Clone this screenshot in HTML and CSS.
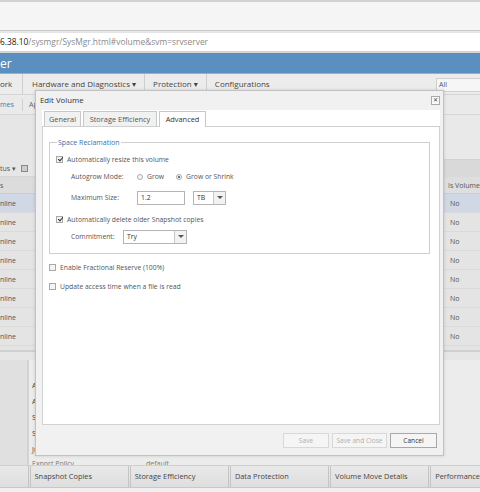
FILE: index.html
```html
<!DOCTYPE html>
<html>
<head>
<meta charset="utf-8">
<link rel="stylesheet" href="styles.css">
</head>
<body>
<div class="page">
  <div class="chrome-top"></div>
  <div class="addr"><span class="host">6.38.10</span><span class="path">/sysmgr/SysMgr.html#volume&amp;svm=srvserver</span></div>
  <div class="brand">er</div>
  <div class="menubar">
    <span class="mi mi-first">ork</span>
    <span class="mi">Hardware and Diagnostics ▾</span>
    <span class="mi">Protection ▾</span>
    <span class="mi mi-last">Configurations</span>
    <span class="allbox">All</span>
  </div>
  <div class="subbar">
    <span class="sb-sel">mes</span>
    <span class="sb-item">Ap</span>
  </div>
  <div class="main">
    <div class="leftpane">
      <div class="lp-space"></div>
      <div class="lp-toolbar"><span>tus ▾</span><span class="tb-icon"></span></div>
      <div class="lp-head">s</div>
      <div class="row sel">nline</div>
      <div class="row">nline</div>
      <div class="row">nline</div>
      <div class="row">nline</div>
      <div class="row">nline</div>
      <div class="row">nline</div>
      <div class="row">nline</div>
      <div class="row">nline</div>
      <div class="row partial"></div>
    </div>
    <div class="midpane"></div>
    <div class="rightpane">
      <div class="rp-box2"></div>
      <div class="rp-band"></div>
      <div class="rp-head">Is Volume</div>
      <div class="row sel">No</div>
      <div class="row">No</div>
      <div class="row">No</div>
      <div class="row">No</div>
      <div class="row">No</div>
      <div class="row">No</div>
      <div class="row">No</div>
      <div class="row">No</div>
      <div class="row partial"></div>
    </div>
  </div>
  <div class="details">
    <div class="det-left"></div>
    <div class="det-body">
      <div class="det-line">A</div>
      <div class="det-line">A</div>
      <div class="det-line">S</div>
      <div class="det-line">S</div>
      <div class="det-line">Ju</div>
      <div class="det-line det-last"><span>Export Policy</span><span class="det-val">default</span></div>
    </div>
  </div>
  <div class="tabs-bottom">
    <span class="bt bt-first"></span>
    <span class="bt">Snapshot Copies</span>
    <span class="bt">Storage Efficiency</span>
    <span class="bt">Data Protection</span>
    <span class="bt">Volume Move Details</span>
    <span class="bt bt-last">Performance</span>
  </div>
  <div class="bottom-strip"></div>

  <div class="dialog">
    <div class="dlg-title"><span>Edit Volume</span><span class="dlg-close">✕</span></div>
    <div class="dlg-tabs">
      <span class="tab t-gen">General</span>
      <span class="tab t-se">Storage Efficiency</span>
      <span class="tab t-adv active">Advanced</span>
    </div>
    <div class="dlg-body">
      <fieldset class="fs">
        <legend>Space Reclamation</legend>
        <div class="chk-line first"><span class="cb checked"></span>Automatically resize this volume</div>
        <div class="form-line">
          <span class="flabel">Autogrow Mode:</span>
          <span class="radio"></span><span class="rlabel">Grow</span>
          <span class="radio on"></span><span class="rlabel">Grow or Shrink</span>
        </div>
        <div class="form-line">
          <span class="flabel">Maximum Size:</span>
          <span class="input">1.2</span>
          <span class="select sel-tb"><span>TB</span><span class="arrow"></span></span>
        </div>
        <div class="chk-line second"><span class="cb checked"></span>Automatically delete older Snapshot copies</div>
        <div class="form-line">
          <span class="flabel flabel-short">Commitment:</span>
          <span class="select sel-try"><span>Try</span><span class="arrow"></span></span>
        </div>
      </fieldset>
      <div class="outer-list">
        <div class="chk-line outer"><span class="cb"></span>Enable Fractional Reserve (100%)</div>
        <div class="chk-line outer"><span class="cb"></span>Update access time when a file is read</div>
      </div>
    </div>
    <div class="dlg-foot">
      <span class="btn disabled">Save</span>
      <span class="btn disabled wide">Save and Close</span>
      <span class="btn cancel">Cancel</span>
    </div>
  </div>
</div>
</body>
</html>
```
FILE: styles.css
```css
* { box-sizing: border-box; }
html, body { margin: 0; padding: 0; }
body {
  width: 480px; height: 492px; overflow: hidden;
  font-family: "Open Sans", "DejaVu Sans", sans-serif;
  color: #333;
  background: #e8e8e8;
}
.page { position: relative; width: 480px; height: 492px; overflow: hidden; }

.chrome-top {
  height: 31px;
  background: #f5f5f5;
  border-top: 2px solid #d2d2d2;
  border-bottom: 1px solid #c9c9c9;
}
.addr {
  height: 21px;
  background: #fff;
  border-top: 1px solid #e4e4e4;
  border-bottom: 2px solid #d4d4d4;
  font-size: 8.4px;
  line-height: 18px;
  white-space: nowrap;
  margin-top: 1px;
}
.addr .host { color: #222; }
.addr .path { color: #8a8a8a; }

.brand {
  height: 21px;
  background: #5a8fc0;
  color: #fff;
  font-size: 12px;
  line-height: 21px;
  border-bottom: 1px solid #8bb0d3;
}

.menubar {
  height: 21px;
  background: #ececec;
  display: flex;
  align-items: center;
  font-size: 8px;
  color: #444;
  white-space: nowrap;
  border-bottom: 1px solid #d4d4d4;
  position: relative;
}
.mi { padding: 0 8px; border-right: 1px solid #cfcfcf; line-height: 20px; }
.mi-first { padding-left: 0; width: 23px; margin-right: 1px; }
.mi-last { border-right: none; }
.allbox {
  position: absolute; left: 436px; top: 4px;
  width: 46px; height: 14px;
  background: #f6f6f6; border: 1px solid #cfcfcf;
  font-size: 7px; line-height: 12px; padding-left: 2px; color: #555;
}

.subbar {
  height: 20px;
  background: #eaeaea;
  display: flex;
  align-items: center;
  font-size: 7px;
  border-bottom: 1px solid #d6d6d6;
}
.sb-sel { color: #3b78b8; width: 23px; border-right: 1px solid #cfcfcf; line-height: 12px; }
.sb-item { padding-left: 6px; color: #666; }

.main { display: flex; height: 245px; }
.leftpane { width: 36px; background: #e6e6e6; border-right: 1px solid #cfcfcf; font-size: 7px; color: #555; white-space: nowrap; overflow: hidden; }
.lp-space { height: 45px; }
.lp-toolbar { height: 17px; display: flex; align-items: center; gap: 6px; border-bottom: 1px solid #d6d6d6; }
.tb-icon { width: 7px; height: 7px; border: 1px solid #888; background: #ccc; }
.lp-head { height: 17px; background: #dcdcdc; line-height: 17px; border-bottom: 1px solid #cdcdcd; }
.row { height: 19px; line-height: 19px; border-bottom: 1px solid #dadada; background: #e4e4e4; }
.row.sel { background: #cfd8e4; }
.row.partial { height: 6px; border-bottom: 2px solid #cfcfcf; }
.midpane { flex: 1; }
.rightpane { width: 38px; background: #e6e6e6; border-left: 2px solid #d0d0d0; font-size: 7px; color: #555; white-space: nowrap; overflow: hidden; }
.rightpane .row { padding-left: 6px; }
.rp-box2 { height: 45px; border-bottom: 1px solid #d2d2d2; background: #e9e9e9; }
.rp-band { height: 17px; background: #d9d9d9; }
.rp-head { height: 17px; line-height: 17px; background: #dedede; padding-left: 4px; border-bottom: 1px solid #cdcdcd; }

.details { display: flex; height: 105px; overflow: hidden; }
.det-left { width: 29px; background: #e0e0e0; border-right: 2px solid #d2d2d2; }
.det-body { flex: 1; background: #ececec; font-size: 7px; color: #444; padding: 18px 0 0 3px; white-space: nowrap; }
.det-line { height: 16px; line-height: 16px; }
.det-last { display: flex; height: 11px; line-height: 11px; color: #777; }
.det-val { margin-left: 72px; }

.tabs-bottom {
  height: 23px;
  display: flex;
  background: linear-gradient(#e9e9e9, #dedede);
  border-top: 1px solid #cfcfcf;
  border-bottom: 1px solid #c8c8c8;
  font-size: 7.4px; color: #444;
  white-space: nowrap;
}
.bt { width: 102px; line-height: 21px; padding-left: 4px; border-left: 3px double #c4c4c4; }
.bt-first { width: 28px; border-left: none; }
.bt-last { flex: 1; }
.bottom-strip { height: 5px; background: #f0f0f0; }

/* dialog */
.dialog {
  position: absolute; left: 35px; top: 90px;
  width: 409px; height: 366px;
  background: #f1f1f1;
  border: 1px solid #c2c2c2;
  box-shadow: 0 0 3px rgba(0,0,0,0.15);
  display: flex; flex-direction: column;
}
.dlg-title {
  height: 19px;
  display: flex; align-items: center; justify-content: space-between;
  padding: 0 3px 1px 4px;
  font-size: 7.8px; color: #333;
}
.dlg-close {
  width: 9px; height: 9px; border: 1px solid #aaa; background: #fafafa;
  font-size: 6px; line-height: 7px; text-align: center; color: #444;
}
.dlg-tabs {
  height: 17px;
  margin: 0 3px 0 6px;
  display: flex; align-items: flex-end; gap: 2px;
  background: #fff;
  border-bottom: 1px solid #cfcfcf;
  padding-left: 2px;
}
.tab {
  height: 15px;
  font-size: 7.4px; line-height: 14px; color: #555; text-align: center;
  background: #f1f1f1; border: 1px solid #c8c8c8; border-bottom: none;
  white-space: nowrap;
}
.t-gen { width: 37px; }
.t-se { width: 74px; }
.t-adv { width: 47px; }
.tab.active { background: #fff; color: #333; margin-bottom: -1px; height: 16px; }
.dlg-body {
  flex: 1;
  margin: 0 3px 0 6px;
  background: #fff;
  border: 1px solid #d2d2d2; border-top: none;
  padding: 11px 9px 0 6px;
  font-size: 6.8px; color: #555;
  white-space: nowrap;
}
.fs {
  margin: 0; padding: 2px 0 6px 6px;
  border: 1px solid #cfcfcf;
  height: 116px;
}
.fs legend { color: #3a6fa8; font-size: 7px; padding: 0 1px; margin-left: 1px; }
.chk-line { display: flex; align-items: center; gap: 4px; height: 14px; }
.chk-line.first { margin-top: 3px; }
.chk-line.second { margin-top: 4px; }
.outer-list { padding-top: 4px; }
.outer { height: 19px; }
.cb {
  width: 7px; height: 7px; border: 1px solid #a8a8a8; background: #f4f4f4; position: relative;
}
.cb.checked::after {
  content: ""; position: absolute; left: 1.5px; top: -0.5px;
  width: 2px; height: 4px;
  border: solid #333; border-width: 0 1.3px 1.3px 0;
  transform: rotate(40deg);
}
.form-line { display: flex; align-items: center; height: 21px; padding-left: 15px; }
.flabel { width: 66px; }
.flabel-short { width: 52px; }
.radio {
  width: 6px; height: 6px; border-radius: 50%;
  border: 1px solid #aaa; background: #f8f8f8; margin-right: 4px; position: relative;
}
.radio.on::after {
  content: ""; position: absolute; left: 1px; top: 1px; width: 2px; height: 2px; border-radius: 50%; background: #444;
}
.rlabel { margin-right: 12px; }
.input {
  width: 48px; height: 14px; border: 1px solid #b4b4b4; background: #fff;
  line-height: 12px; padding-left: 3px; color: #333;
}
.select {
  display: flex; justify-content: space-between; align-items: center;
  height: 14px; border: 1px solid #b4b4b4; background: #fff;
  padding-left: 3px; color: #333;
}
.sel-tb { width: 33px; margin-left: 8px; }
.sel-try { width: 64px; }
.arrow {
  width: 12px; height: 12px; border-left: 1px solid #c8c8c8; background: #f2f2f2; position: relative;
}
.arrow::after {
  content: ""; position: absolute; left: 3px; top: 4px;
  border-left: 3px solid transparent; border-right: 3px solid transparent; border-top: 3px solid #555;
}
.dlg-foot {
  height: 30px;
  display: flex; justify-content: flex-end; align-items: center; gap: 3px;
  padding-right: 6px;
}
.btn {
  width: 46px; height: 15px; border: 1px solid #c4c4c4; background: #f5f5f5;
  font-size: 6.6px; line-height: 13px; text-align: center; color: #333;
}
.btn.wide { width: 55px; }
.btn.cancel { width: 47px; border-color: #a8a8a8; }
.btn.disabled { color: #b0b0b0; border-color: #d8d8d8; }
```
